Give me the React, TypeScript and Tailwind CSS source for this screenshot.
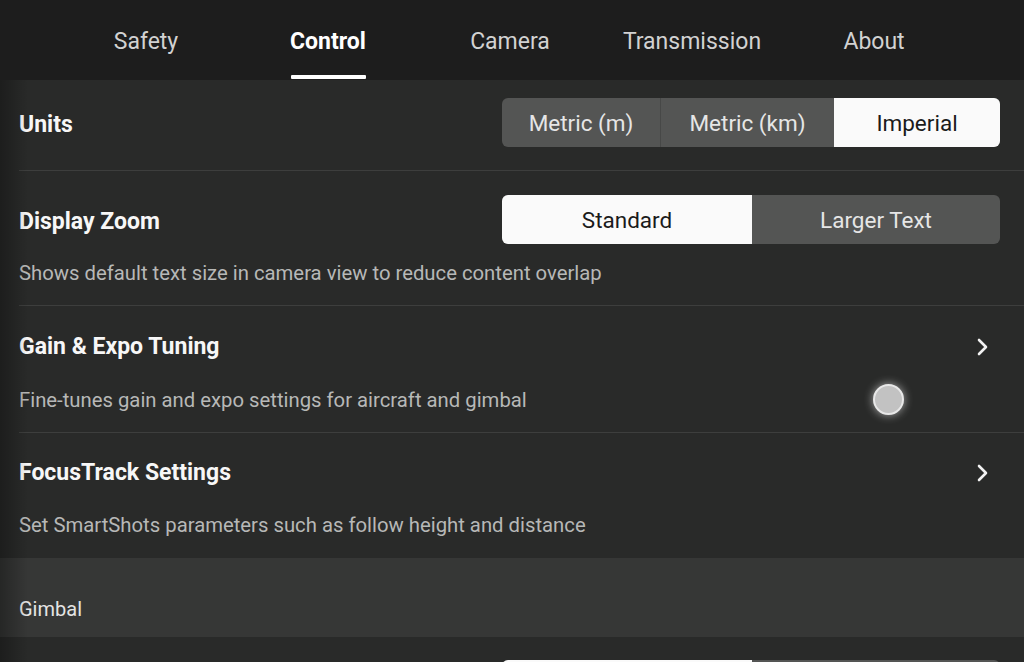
import React from "react";

const tabs = ["Safety", "Control", "Camera", "Transmission", "About"];

function Segmented({ options, widths, active }: { options: string[]; widths: string[]; active: number }) {
  return (
    <div className="flex h-[49px] w-[498px] overflow-hidden rounded-[6px] bg-[#545554]">
      {options.map((o, i) => (
        <div
          key={o}
          className={`${widths[i]} flex h-full items-center justify-center pt-[2px] text-[22.5px] ${
            i === active ? "bg-[#fafafa] text-[#1b1b1b]" : "text-[#e6e6e6]"
          } ${i > 0 && i !== active && i - 1 !== active ? "border-l border-[#474847]" : ""}`}
        >
          {o}
        </div>
      ))}
    </div>
  );
}

function Chevron() {
  return (
    <svg width="14" height="20" viewBox="0 0 14 20" fill="none" aria-hidden="true">
      <polyline points="3,3 10,10 3,17" stroke="#f2f2f2" strokeWidth="2.6" strokeLinecap="round" strokeLinejoin="round" />
    </svg>
  );
}

function LinkRow({ title, desc, top, mid, bottom }: { title: string; desc: string; top: string; mid: string; bottom: string }) {
  return (
    <div className={`flex flex-col pl-[19px] pr-[34px] ${top} ${bottom}`}>
      <div className="flex h-[28px] items-center justify-between">
        <span className="text-[23px] font-bold leading-[28px] text-[#f7f7f7]">{title}</span>
        <Chevron />
      </div>
      <p className={`${mid} text-[20.3px] leading-[24px] text-[#b7b8b7]`}>{desc}</p>
    </div>
  );
}

export default function App() {
  return (
    <div className="relative h-[662px] w-[1024px] overflow-hidden bg-[#292a29] font-['Roboto',sans-serif]">
      <div className="flex h-[80px] bg-[#1d1d1d] pl-[55px]">
        {tabs.map((t) => (
          <div key={t} className="flex w-[182px] flex-col items-center pt-[29px]">
            <span
              className={`text-[23px] leading-[26px] ${
                t === "Control" ? "font-bold text-white" : "text-[#d2d2d2]"
              }`}
            >
              {t}
            </span>
            <div className={`mt-[20px] h-[4px] w-[75px] rounded-[1px] ${t === "Control" ? "bg-white" : "bg-transparent"}`} />
          </div>
        ))}
      </div>

      <div className="flex items-center justify-between pb-[23px] pl-[19px] pr-[24px] pt-[18px]">
        <span className="pt-[5px] text-[23px] font-bold leading-[28px] text-[#f7f7f7]">Units</span>
        <Segmented options={["Metric (m)", "Metric (km)", "Imperial"]} widths={["w-[158px]", "w-[174px]", "w-[166px]"]} active={2} />
      </div>
      <div className="ml-[19px] h-px bg-[#3d3e3d]" />

      <div className="flex flex-col pb-[20px] pl-[19px] pr-[24px] pt-[24px]">
        <div className="flex items-center justify-between">
          <span className="pt-[4px] text-[23px] font-bold leading-[28px] text-[#f7f7f7]">Display Zoom</span>
          <Segmented options={["Standard", "Larger Text"]} widths={["w-[250px]", "w-[248px]"]} active={0} />
        </div>
        <p className="mt-[17px] text-[20.3px] leading-[24px] text-[#b7b8b7]">
          Shows default text size in camera view to reduce content overlap
        </p>
      </div>
      <div className="ml-[19px] h-px bg-[#3d3e3d]" />

      <LinkRow
        title="Gain & Expo Tuning"
        desc="Fine-tunes gain and expo settings for aircraft and gimbal"
        top="pt-[27px]"
        mid="mt-[27px]"
        bottom="pb-[20px]"
      />
      <div className="ml-[19px] h-px bg-[#3d3e3d]" />

      <LinkRow
        title="FocusTrack Settings"
        desc="Set SmartShots parameters such as follow height and distance"
        top="pt-[26px]"
        mid="mt-[26px]"
        bottom="pb-[21px]"
      />

      <div className="bg-[#363736] pb-[14px] pl-[19px] pt-[39px]">
        <span className="text-[20px] leading-[24px] text-[#e4e4e4]">Gimbal</span>
      </div>

      <div className="flex justify-end pr-[24px] pt-[23px]">
        <Segmented options={["", " "]} widths={["w-[250px]", "w-[248px]"]} active={0} />
      </div>

      <div className="absolute left-[873px] top-[384px] h-[31px] w-[31px] rounded-full border-2 border-[#e8e8e8] bg-[#c2c2c2] shadow-[0_0_10px_rgba(255,255,255,0.6)]" />
      <div className="pointer-events-none absolute bottom-0 left-0 top-[80px] w-[28px] bg-gradient-to-r from-black/30 to-transparent" />
    </div>
  );
}
